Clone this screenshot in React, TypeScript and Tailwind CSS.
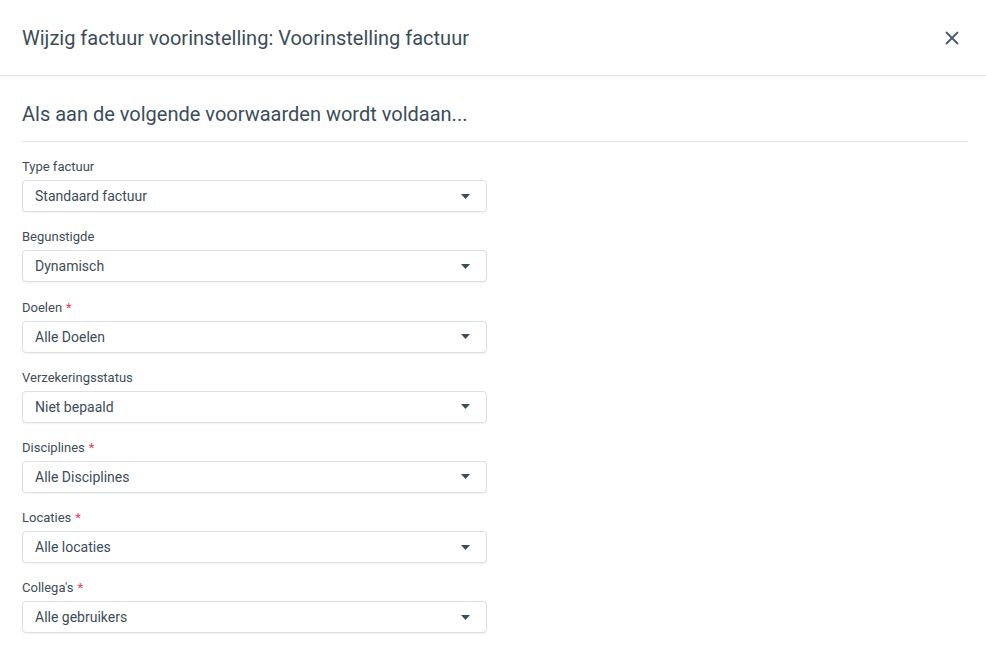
import { X } from "lucide-react";

const fields = [
  { label: "Type factuur", value: "Standaard factuur", required: false },
  { label: "Begunstigde", value: "Dynamisch", required: false },
  { label: "Doelen", value: "Alle Doelen", required: true },
  { label: "Verzekeringsstatus", value: "Niet bepaald", required: false },
  { label: "Disciplines", value: "Alle Disciplines", required: true },
  { label: "Locaties", value: "Alle locaties", required: true },
  { label: "Collega's", value: "Alle gebruikers", required: true },
];

function SelectField({ label, value, required }: { label: string; value: string; required: boolean }) {
  return (
    <div className="mt-[16.2px]">
      <label className="block text-[13px] leading-[18px] text-[#3d4d58] mb-1">
        {label}
        {required && <span className="text-[#e83a6b] ml-1">*</span>}
      </label>
      <div className="w-[465px] h-8 flex items-center justify-between pl-3 pr-4 border border-[#dcdfe3] rounded-[4px] bg-white shadow-[0_1px_2px_rgba(0,0,0,0.06)] text-sm text-[#3d4d58]">
        <span>{value}</span>
        <svg width="9" height="5" viewBox="0 0 9 5" className="text-[#3d4d58]">
          <path d="M0 0h9L4.5 5z" fill="currentColor" />
        </svg>
      </div>
    </div>
  );
}

export default function App() {
  return (
    <div className="w-[986px] h-[653px] bg-white overflow-hidden font-['Roboto',sans-serif]">
      <div className="h-[76px] flex items-center justify-between pl-[22px] pr-[23px] border-b border-[#e4e6e8] shadow-[0_1px_3px_rgba(0,0,0,0.05)]">
        <h1 className="text-[20px] text-[#3b4d59]">Wijzig factuur voorinstelling: Voorinstelling factuur</h1>
        <X className="w-[22px] h-[22px] text-[#4a5d69]" strokeWidth={2} />
      </div>
      <div className="pl-[22px] pr-[18px] pt-[25px]">
        <h2 className="text-[20px] leading-[27px] text-[#3b4d59] pb-[13px] border-b border-[#e4e6e8]">
          Als aan de volgende voorwaarden wordt voldaan...
        </h2>
        {fields.map((f) => (
          <SelectField key={f.label} {...f} />
        ))}
      </div>
    </div>
  );
}
